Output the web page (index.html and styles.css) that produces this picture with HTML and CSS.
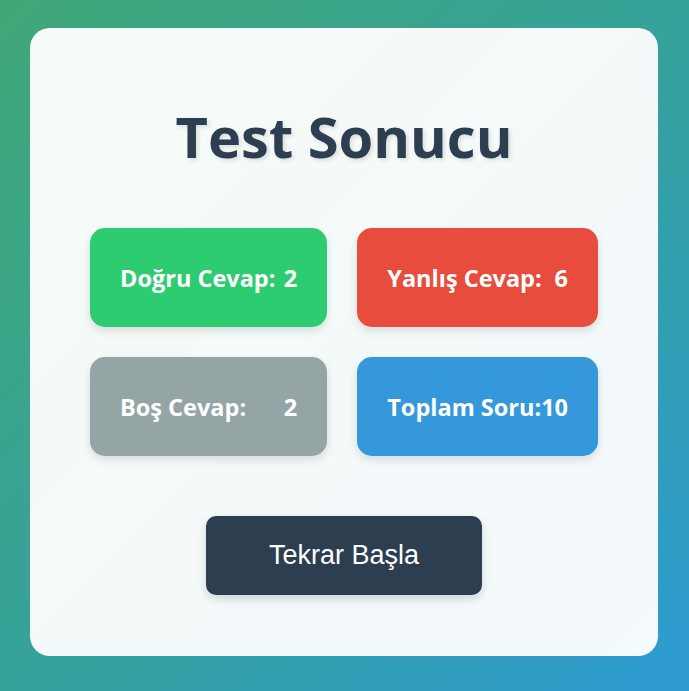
FILE: index.html
```html
<!DOCTYPE html>
<html lang="tr">
<head>
<meta charset="utf-8">
<title>Test Sonucu</title>
<link rel="stylesheet" href="styles.css">
</head>
<body>
  <div class="result-card">
    <h1 class="title">Test Sonucu</h1>
    <div class="stats">
      <div class="stat stat-correct"><span>Doğru Cevap:</span><span>2</span></div>
      <div class="stat stat-wrong"><span>Yanlış Cevap:</span><span>6</span></div>
      <div class="stat stat-empty"><span>Boş Cevap:</span><span>2</span></div>
      <div class="stat stat-total"><span>Toplam Soru:</span><span>10</span></div>
    </div>
    <div class="actions">
      <button class="restart">Tekrar Başla</button>
    </div>
  </div>
</body>
</html>
```
FILE: styles.css
```css
* { box-sizing: border-box; }

html, body { height: 100%; }

body {
  margin: 0;
  padding: 28px 1px 0 0;
  background: linear-gradient(135deg, #40a877 0%, #36a29a 50%, #2d9bd3 100%);
  display: flex;
  justify-content: center;
  align-items: flex-start;
  font-family: "Open Sans", "Noto Sans", sans-serif;
}

.result-card {
  width: 628px;
  height: 628px;
  padding: 60px;
  background: rgba(255, 255, 255, 0.95);
  border-radius: 20px;
}

.title {
  margin: 15px 0 58px;
  font-size: 56px;
  line-height: 67px;
  font-weight: 700;
  color: #2c3e50;
  text-align: center;
  text-shadow: 2px 2px 4px rgba(0, 0, 0, 0.12);
}

.stats {
  display: grid;
  grid-template-columns: 1fr 1fr;
  gap: 30px;
}

.stat {
  display: flex;
  justify-content: space-between;
  align-items: center;
  height: 99px;
  padding: 0 30px;
  white-space: nowrap;
  font-size: 23.5px;
  font-weight: 700;
  color: #fff;
  border-radius: 15px;
  box-shadow: 0 4px 10px rgba(0, 0, 0, 0.12);
}

.stat-correct { background: #2ecc71; }
.stat-wrong { background: #e74c3c; }
.stat-empty { background: #95a5a6; }
.stat-total { background: #3498db; }

.actions {
  display: flex;
  justify-content: center;
  margin-top: 60px;
}

.restart {
  width: 276px;
  height: 79px;
  border: none;
  border-radius: 10px;
  background: #2c3e50;
  color: #fff;
  font-family: "Liberation Sans", Arial, sans-serif;
  font-size: 27px;
  box-shadow: 0 4px 10px rgba(0, 0, 0, 0.15);
  cursor: pointer;
}
```
